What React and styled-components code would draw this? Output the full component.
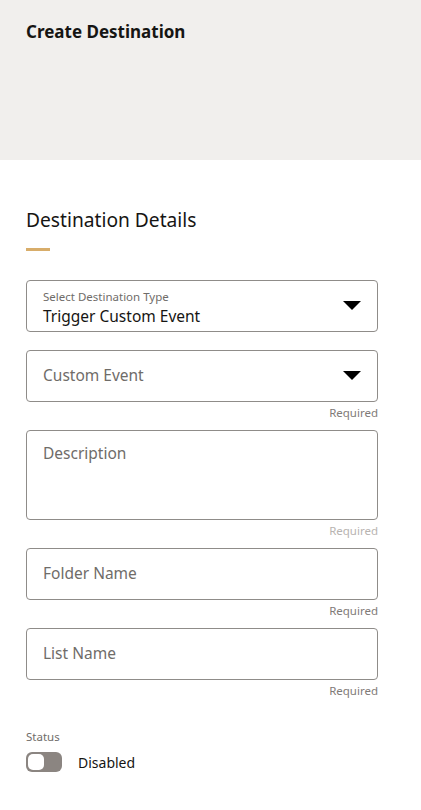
import styled, { createGlobalStyle } from 'styled-components';

const GlobalStyle = createGlobalStyle`
  body {
    margin: 0;
    background: #fff;
    font-family: 'Noto Sans', 'Open Sans', sans-serif;
    color: #161513;
  }
`;

const Page = styled.div`
  width: 421px;
  min-height: 810px;
  background: #fff;
`;

const Header = styled.header`
  height: 160px;
  background: #f1efed;
  padding: 20px 26px 0;
  box-sizing: border-box;
`;

const Title = styled.h1`
  margin: 0;
  font-size: 17px;
  font-weight: 700;
  line-height: 24px;
  color: #161513;
`;

const Body = styled.div`
  padding: 46px 43px 0 26px;
`;

const SectionTitle = styled.h2`
  margin: 0;
  font-size: 19.2px;
  font-weight: 400;
  line-height: 28px;
  color: #161513;
`;

const Accent = styled.div`
  width: 24px;
  height: 3px;
  background: #d8ad6a;
  margin: 14px 0 29px;
`;

const Field = styled.div`
  margin-bottom: ${(p) => p.$gap}px;
`;

const Box = styled.div`
  position: relative;
  height: ${(p) => p.$h || 52}px;
  border: 1px solid #8f8c89;
  border-radius: 4px;
  box-sizing: border-box;
  display: flex;
  flex-direction: column;
  justify-content: ${(p) => (p.$top ? 'flex-start' : 'center')};
  padding: ${(p) => p.$pad || '0 16px'};
`;

const SmallLabel = styled.div`
  font-size: 11.5px;
  line-height: 14px;
  color: #6f6c69;
`;

const Value = styled.div`
  font-size: 15.5px;
  line-height: 20px;
  color: #161513;
  margin-top: 2px;
`;

const Placeholder = styled.div`
  font-size: 15.5px;
  line-height: 22px;
  color: #6f6c69;
  margin-bottom: 2px;
`;

const Arrow = styled.span`
  position: absolute;
  right: 16px;
  top: 50%;
  margin-top: -5px;
  width: 0;
  height: 0;
  border-left: 9px solid transparent;
  border-right: 9px solid transparent;
  border-top: 9px solid #000;
`;

const Hint = styled.div`
  text-align: right;
  font-size: 11.5px;
  line-height: 14px;
  margin-top: 4px;
  color: ${(p) => (p.$light ? '#b8b4b1' : '#7f7b78')};
`;

const StatusLabel = styled.div`
  margin-top: 32px;
  font-size: 11.5px;
  line-height: 14px;
  color: #6f6c69;
`;

const StatusRow = styled.div`
  display: flex;
  align-items: center;
  gap: 16px;
  margin-top: 8px;
`;

const Toggle = styled.div`
  width: 36px;
  height: 20px;
  border-radius: 6px;
  background: #8b8581;
  padding: 2px;
  box-sizing: border-box;
  display: flex;
`;

const Knob = styled.div`
  width: 16px;
  height: 16px;
  border-radius: 5px;
  background: #fff;
`;

const ToggleText = styled.span`
  font-size: 14px;
  color: #161513;
`;

export default function App() {
  return (
    <Page>
      <GlobalStyle />
      <Header>
        <Title>Create Destination</Title>
      </Header>
      <Body>
        <SectionTitle>Destination Details</SectionTitle>
        <Accent />

        <Field $gap={18}>
          <Box $top $pad="9px 16px 0">
            <SmallLabel>Select Destination Type</SmallLabel>
            <Value>Trigger Custom Event</Value>
            <Arrow />
          </Box>
        </Field>

        <Field $gap={10}>
          <Box>
            <Placeholder>Custom Event</Placeholder>
            <Arrow />
          </Box>
          <Hint>Required</Hint>
        </Field>

        <Field $gap={10}>
          <Box $h={90} $top $pad="11px 16px 0">
            <Placeholder>Description</Placeholder>
          </Box>
          <Hint $light>Required</Hint>
        </Field>

        <Field $gap={10}>
          <Box>
            <Placeholder>Folder Name</Placeholder>
          </Box>
          <Hint>Required</Hint>
        </Field>

        <Field $gap={0}>
          <Box>
            <Placeholder>List Name</Placeholder>
          </Box>
          <Hint>Required</Hint>
        </Field>

        <StatusLabel>Status</StatusLabel>
        <StatusRow>
          <Toggle>
            <Knob />
          </Toggle>
          <ToggleText>Disabled</ToggleText>
        </StatusRow>
      </Body>
    </Page>
  );
}
